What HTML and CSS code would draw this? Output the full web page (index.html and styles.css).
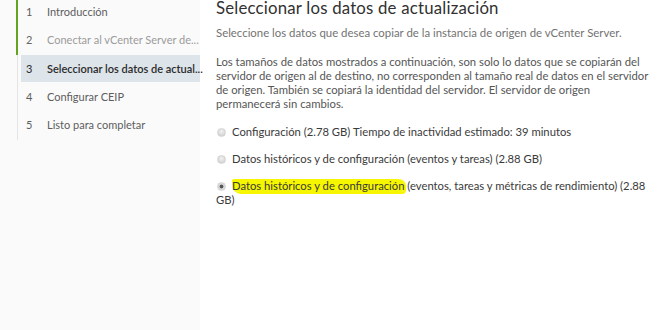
FILE: index.html
```html
<!DOCTYPE html>
<html lang="es">
<head>
<meta charset="utf-8">
<link rel="stylesheet" href="styles.css">
</head>
<body>
<div class="wizard">
  <nav class="steps">
    <ol class="step-list">
      <li class="step done"><span class="num">1</span><span class="label">Introducción</span></li>
      <li class="step done muted"><span class="num">2</span><span class="label">Conectar al vCenter Server de...</span></li>
      <li class="step active"><span class="num">3</span><span class="label">Seleccionar los datos de actual...</span></li>
      <li class="step"><span class="num">4</span><span class="label">Configurar CEIP</span></li>
      <li class="step"><span class="num">5</span><span class="label">Listo para completar</span></li>
    </ol>
  </nav>
  <main class="content">
    <h1 class="title">Seleccionar los datos de actualización</h1>
    <p class="subtitle">Seleccione los datos que desea copiar de la instancia de origen de vCenter Server.</p>
    <p class="info">Los tamaños de datos mostrados a continuación, son solo lo datos que se copiarán del servidor de origen al de destino, no corresponden al tamaño real de datos en el servidor de origen. También se copiará la identidad del servidor. El servidor de origen permanecerá sin cambios.</p>
    <div class="options">
      <label class="option"><span class="radio"></span>Configuración (2.78 GB) Tiempo de inactividad estimado: 39 minutos</label>
      <label class="option"><span class="radio"></span>Datos históricos y de configuración (eventos y tareas) (2.88 GB)</label>
      <label class="option"><span class="radio checked"></span><span class="mark">Datos históricos y de configuración</span> (eventos, tareas y métricas de rendimiento) (2.88 GB)</label>
    </div>
  </main>
</div>
</body>
</html>
```

FILE: styles.css
```css
* { box-sizing: border-box; }
html, body { margin: 0; padding: 0; background: #fff; }
body {
  width: 660px;
  height: 330px;
  overflow: hidden;
  font-family: Lato, "Noto Sans", sans-serif;
}
.wizard {
  display: flex;
  height: 330px;
}
.steps {
  width: 200px;
  flex: none;
  background: #fafafa;
  padding-left: 17px;
}
.step-list {
  list-style: none;
  margin: 0;
  padding: 0 0 0 3px;
  border-left: 1px solid #e4e4e4;
  margin-top: -2px;
  padding-bottom: 1px;
}
.step {
  position: relative;
  display: flex;
  align-items: center;
  height: 27px;
  margin-bottom: 1.3px;
  padding-left: 5px;
  font-size: 11px;
  color: #5d5d5d;
  white-space: nowrap;
}
.step.done::before {
  content: "";
  position: absolute;
  left: -5px;
  top: 0;
  bottom: -1.3px;
  width: 2px;
  background: #62a420;
}
.step.muted { color: #9b9b9b; }
.step.muted .num { color: #666; }
.step.active {
  background: #dde4ea;
  color: #2b2b2b;
  font-weight: 600;
}
.num {
  width: 21px;
  flex: none;
  font-weight: 400;
}
.content {
  flex: 1;
  padding-left: 16px;
  padding-right: 5px;
  color: #444;
}
.title {
  margin: -2px 0 0;
  font-size: 16.8px;
  line-height: 20px;
  font-weight: 400;
  color: #313131;
  letter-spacing: 0.2px;
}
.subtitle {
  margin: 8px 0 0;
  font-size: 11.4px;
  color: #737373;
}
.info {
  margin: 16px 0 0;
  font-size: 11.3px;
  line-height: 14px;
  color: #565656;
}
.options {
  display: flex;
  flex-direction: column;
  gap: 13px;
  margin-top: 14px;
}
.option {
  font-size: 11.25px;
  line-height: 14px;
  color: #3a3a3a;
}
.radio {
  display: inline-block;
  width: 9px;
  height: 9px;
  border-radius: 50%;
  background: radial-gradient(circle at 50% 35%, #f2f2f2, #c9c9c9);
  border: 1px solid #d4d4d4;
  margin: 0 6px 0 1px;
  vertical-align: -1px;
}
.radio.checked {
  background: radial-gradient(circle, #555 0 1.6px, #d0d0d0 2.2px, #e8e8e8);
}
.mark {
  background: #f6f600;
  box-shadow: 1px 1px 0 1px #f6f600;
  border-radius: 2px 6px 3px 8px;
}
```
